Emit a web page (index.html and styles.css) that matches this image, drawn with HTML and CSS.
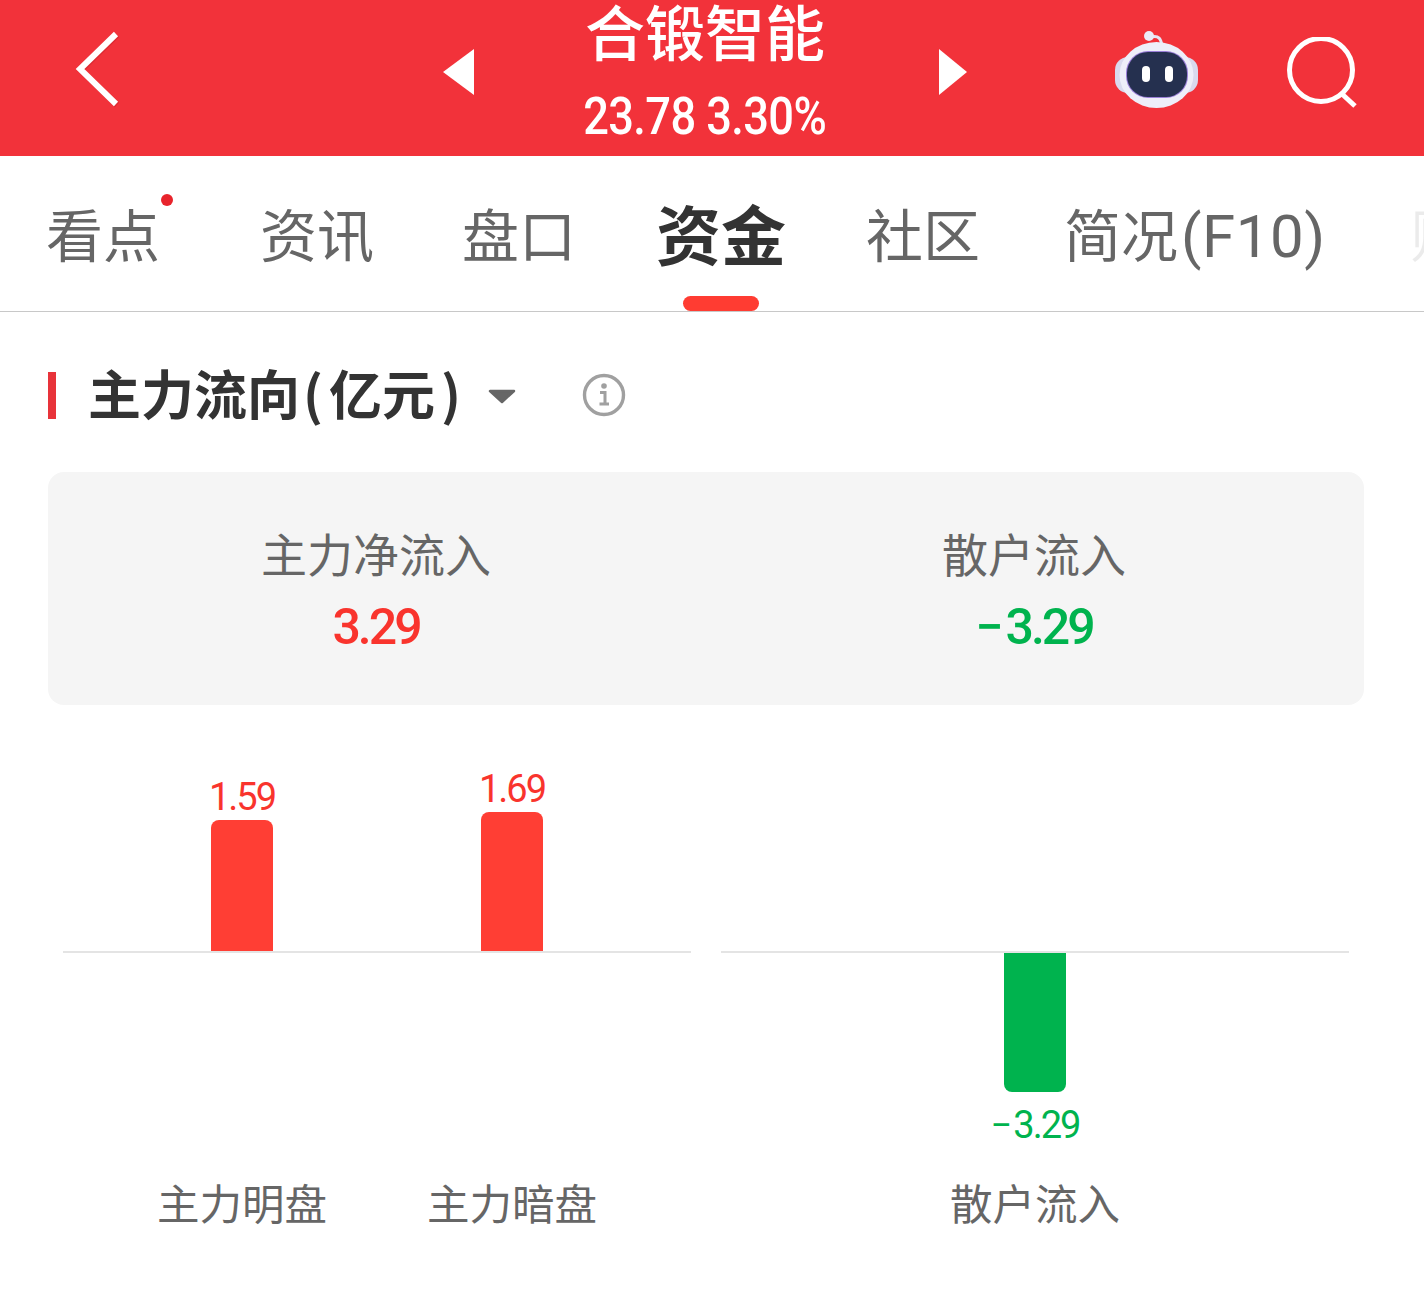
FILE: index.html
```html
<!DOCTYPE html>
<html lang="zh-CN">
<head>
  <meta charset="UTF-8" />
  <title>合锻智能</title>
  <link rel="stylesheet" href="styles.css">
</head>
<body>
  <header class="topbar">
    <svg class="back" width="46" height="78" viewBox="0 0 46 78"><path d="M41 4 L5 39 L41 74" fill="none" stroke="#c9222a" stroke-width="6" transform="translate(1 1)" opacity="0.5"/><path d="M41 4 L5 39 L41 74" fill="none" stroke="#fff" stroke-width="6"/></svg>
    <div class="stock">
      <span class="arrow arrow-left"></span>
      <div class="stock-name">
        <div class="name">合锻智能</div>
        <div class="price">23.78 3.30%</div>
      </div>
      <span class="arrow arrow-right"></span>
    </div>
    <svg class="robot" width="86" height="80" viewBox="0 0 86 80">
      <path d="M36 7 C44 5 46 9 47 16" fill="none" stroke="#e6e6f5" stroke-width="3"/>
      <circle cx="34" cy="6" r="5" fill="#ecebf8"/>
      <rect x="0" y="27" width="83" height="36" rx="13" fill="#d9d9ee"/>
      <ellipse cx="41.5" cy="45" rx="37" ry="33" fill="#eeeef9"/>
      <rect x="11" y="21" width="62" height="47" rx="22" fill="#9a7fd8"/>
      <rect x="12" y="22" width="60" height="45" rx="21" fill="#25304f"/>
      <rect x="27" y="36" width="8" height="16" rx="4" fill="#fff"/>
      <rect x="50" y="36" width="8" height="16" rx="4" fill="#fff"/>
    </svg>
    <svg class="search" width="72" height="72" viewBox="0 0 72 72"><circle cx="34" cy="33" r="31.5" fill="none" stroke="#fff" stroke-width="5"/><path d="M55 57 L68 69" fill="none" stroke="#fff" stroke-width="5"/></svg>
  </header>

  <nav class="tabs">
    <a class="tab tab-1">看点<i class="dot"></i></a>
    <a class="tab tab-2">资讯</a>
    <a class="tab tab-3">盘口</a>
    <a class="tab tab-4 active">资金</a>
    <a class="tab tab-5">社区</a>
    <a class="tab tab-6">简况<span class="latin">(F10)</span></a>
    <a class="tab tab-7">财</a>
  </nav>

  <main class="content">
    <div class="section-title">
      <span class="mark"></span>
      <h2>主力流向<span class="paren paren-open">(</span>亿元<span class="paren paren-close">)</span></h2>
      <svg class="caret" width="28" height="15" viewBox="0 0 28 15"><path d="M2 2 H26 L14 13 Z" fill="#666" stroke="#666" stroke-width="2.5" stroke-linejoin="round"/></svg>
      <svg class="info" width="44" height="44" viewBox="0 0 44 44">
        <circle cx="22" cy="22" r="19.5" fill="none" stroke="#a0a0a0" stroke-width="3.4"/>
        <circle cx="22" cy="13" r="2.8" fill="#a0a0a0"/>
        <path d="M18 19.5 H23 V31 M17.5 31 H27" fill="none" stroke="#a0a0a0" stroke-width="3"/>
      </svg>
    </div>

    <div class="summary">
      <div class="summary-col">
        <div class="summary-label">主力净流入</div>
        <div class="summary-value up">3.29</div>
      </div>
      <div class="summary-col col-right">
        <div class="summary-label">散户流入</div>
        <div class="summary-value down"><span class="minus">−</span>3.29</div>
      </div>
    </div>

    <div class="chart">
      <div class="group group-main">
        <div class="bar-col">
          <div class="half half-top"><span class="val up">1.59</span><div class="bar bar-up" style="height:131px"></div></div>
          <div class="half half-bottom"></div>
          <div class="bar-label">主力明盘</div>
        </div>
        <div class="bar-col">
          <div class="half half-top"><span class="val up">1.69</span><div class="bar bar-up" style="height:139px"></div></div>
          <div class="half half-bottom"></div>
          <div class="bar-label">主力暗盘</div>
        </div>
      </div>
      <div class="group group-retail">
        <div class="bar-col">
          <div class="half half-top"></div>
          <div class="half half-bottom"><div class="bar bar-down" style="height:139px"></div><span class="val down"><span class="minus">−</span>3.29</span></div>
          <div class="bar-label">散户流入</div>
        </div>
      </div>
    </div>
  </main>
</body>
</html>
```

FILE: styles.css
```css
* { box-sizing: border-box; }
html, body { margin: 0; padding: 0; }
body { width: 1424px; height: 1309px; overflow: hidden; background: #fff; font-family: "Noto Sans CJK SC", "Noto Sans", sans-serif; }

.topbar { height: 156px; background: #f2323a; display: flex; align-items: center; color: #fff; overflow: hidden; }
.back { margin: -18px 0 0 75px; flex: none; }
.stock { width: 524px; margin-left: 322px; display: flex; align-items: center; justify-content: space-between; flex: none; margin-top: -12px; }
.arrow { width: 0; height: 0; border-top: 23px solid transparent; border-bottom: 23px solid transparent; }
.arrow-left { border-right: 31px solid #fff; }
.arrow-right { border-left: 28px solid #fff; }
.stock-name { text-align: center; margin-top: -2px; margin-right: 3px; }
.name { font-size: 60px; line-height: 64px; font-weight: 500; }
.price { font-family: "Roboto", sans-serif; font-size: 52px; line-height: 56px; margin-top: 27px; font-weight: 500; letter-spacing: -0.7px; transform: scaleX(0.87); white-space: nowrap; }
.robot { margin: -16px 0 0 148px; flex: none; }
.search { margin: -10px 0 0 86px; flex: none; }

.tabs { height: 156px; border-bottom: 1px solid #c8c8c8; display: flex; overflow: hidden; font-size: 57px; color: #666; padding-top: 43px; }
.tab { position: relative; line-height: 66px; white-space: nowrap; flex: none; font-weight: 400; }
.tab-1 { margin-left: 46px; }
.tab-2 { margin-left: 100px; }
.tab-3 { margin-left: 88px; }
.tab-4 { margin-left: 80px; }
.tab-5 { margin-left: 80px; }
.tab-6 { margin-left: 84px; }
.tab-7 { margin-left: 85px; opacity: 0.12; }
.tab .latin { font-family: "Roboto", sans-serif; font-size: 60px; font-weight: 400; letter-spacing: 0.5px; margin-left: 3px; }
.tab.active { color: #333; font-weight: 700; font-size: 65px; }
.tab.active::after { content: ""; position: absolute; left: 27px; top: 97px; width: 76px; height: 15px; background: #ff3c32; border-radius: 8px; }
.dot { position: absolute; right: -13px; top: -5px; width: 12px; height: 12px; border-radius: 50%; background: #e8242c; }

.content { padding: 0 60px 0 48px; }
.section-title { display: flex; align-items: center; height: 60px; margin-top: 54px; }
.mark { width: 8px; height: 47px; background: #e8333a; margin-top: -2px; }
.section-title h2 { margin: -8px 0 0 32px; font-size: 53px; line-height: 60px; font-weight: 700; color: #333; white-space: nowrap; }
.paren-open { margin: 0 6px 0 3px; }
.paren-close { margin-left: 6px; }
.caret { margin-left: 27px; flex: none; }
.info { margin-left: 66px; margin-top: -2px; flex: none; }

.summary { margin-top: 46px; height: 233px; border-radius: 16px; background: #f5f5f5; display: flex; padding-top: 48px; text-align: center; }
.summary-col { width: 656px; }
.summary-col.col-right { width: 660px; }
.summary-label { font-size: 46px; line-height: 64px; color: #666; font-weight: 400; }
.summary-value { font-family: "Roboto", sans-serif; font-size: 50px; line-height: 60px; margin-top: 13px; letter-spacing: -3px; font-weight: 500; }
.minus { margin-right: 5px; }
.up { color: #f9342d; }
.down { color: #00b34e; }

.chart { display: flex; gap: 30px; margin: 0 0 0 15px; }
.group { width: 628px; display: flex; position: relative; }
.group-main { padding-left: 44px; gap: 0; }
.bar-col { width: 270px; display: flex; flex-direction: column; align-items: stretch; }
.group-retail .bar-col { width: 628px; }
.half { display: flex; flex-direction: column; align-items: center; }
.half-top { height: 246px; justify-content: flex-end; }
.half-bottom { height: 184px; padding-top: 2px; }
.group::before { content: ""; position: absolute; left: 0; right: 0; top: 246px; height: 2px; background: #e4e4e4; }
.bar { width: 62px; position: relative; flex: none; }
.bar-up { background: #ff3e34; border-radius: 8px 8px 0 0; }
.bar-down { background: #00b34e; border-radius: 0 0 8px 8px; }
.val { font-family: "Roboto", sans-serif; font-size: 38px; line-height: 46px; margin-bottom: 0; letter-spacing: -2px; }
.val .minus { margin-right: 3px; }
.half-bottom .val { margin: 10px 0 0; }
.bar-label { text-align: center; font-size: 42.5px; line-height: 60px; color: #666; font-weight: 400; margin-top: 37px; }
```
